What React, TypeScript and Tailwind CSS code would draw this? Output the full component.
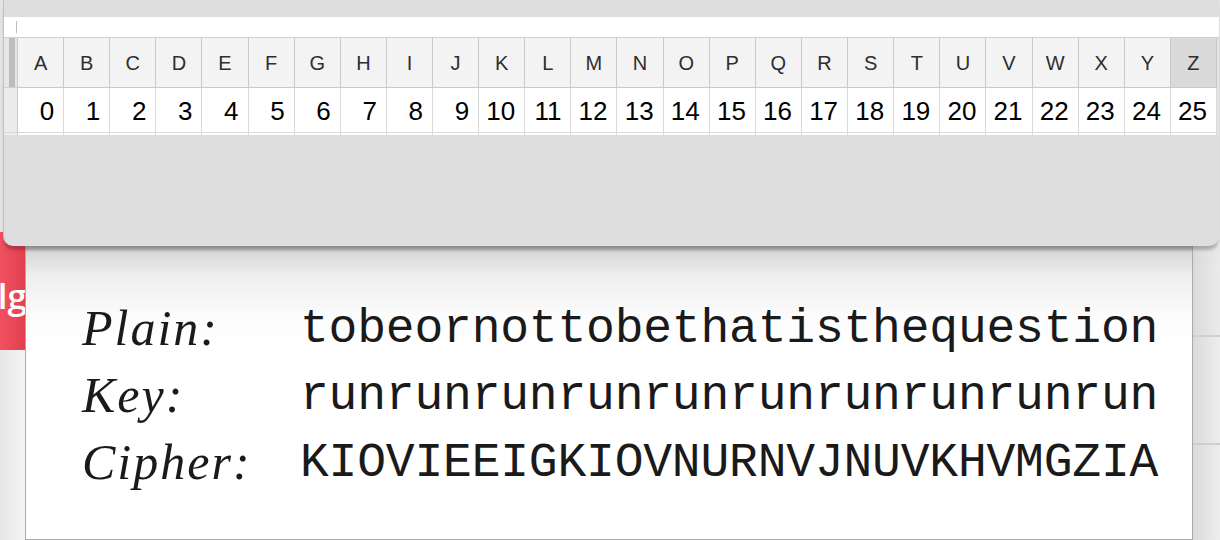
import React from 'react';

const letters = 'ABCDEFGHIJKLMNOPQRSTUVWXYZ'.split('');

const rows = [
  { label: 'Plain:', text: 'tobeornottobethatisthequestion' },
  { label: 'Key:', text: 'runrunrunrunrunrunrunrunrunrun' },
  { label: 'Cipher:', text: 'KIOVIEEIGKIOVNURNVJNUVKHVMGZIA' },
];

const SheetWindow = () => (
  <div className="relative z-10 ml-[3px] w-[1216px] h-[246px] bg-[#dedede] border-l border-[#c2c2c2] rounded-b-[10px] shadow-[0_5px_3px_-1px_rgba(0,0,0,0.22)] overflow-hidden">
    <div className="h-[17px]" />
    <div className="h-[20px] bg-white flex items-center pl-[12px]">
      <div className="w-px h-[12px] bg-[#bcbcbc]" />
    </div>
    <div className="flex border-t border-[#cfcfcf]">
      <div className="w-[13px] flex flex-col">
        <div className="h-[50px] bg-[#e6e6e6] flex border-b border-[#cfcfcf]">
          <div className="w-[5px]" />
          <div className="w-[6px] bg-[#bdbdbd]" />
        </div>
        <div className="h-[45px] bg-[#ececec] border-b border-[#d8d8d8]" />
        <div className="h-[2px] bg-[#ececec]" />
      </div>
      <div className="w-[1200px] grid grid-cols-[repeat(26,1fr)] border-l border-[#c9c9c9]">
        {letters.map((l) => (
          <div
            key={l}
            className={`h-[50px] flex items-center justify-center border-r border-b border-[#c9c9c9] text-[20px] text-[#2e2e2e] font-['Liberation_Sans',Arial,sans-serif] ${
              l === 'Z' ? 'bg-[#dadada]' : 'bg-[#f3f3f3]'
            }`}
          >
            {l}
          </div>
        ))}
        {letters.map((l, i) => (
          <div
            key={'n' + l}
            className="h-[45px] flex items-center justify-end pr-[9px] pt-[2px] bg-white border-r border-b border-[#dadada] text-[26px] text-black font-['Liberation_Sans',Arial,sans-serif]"
          >
            {i}
          </div>
        ))}
        {letters.map((l) => (
          <div key={'e' + l} className="h-[2px] bg-white border-r border-[#dadada]" />
        ))}
      </div>
      <div className="flex-1 bg-[#e4e4e4]" />
    </div>
  </div>
);

export default function App() {
  return (
    <div className="w-[1220px] h-[540px] overflow-hidden bg-[#e3e3e3] flex flex-col">
      <SheetWindow />
      <div className="-mt-[14px] flex flex-1">
        <div className="w-[25px] flex flex-col bg-gradient-to-r from-[#e6e6e6] to-[#f4f4f4]">
          <div className="h-[118px] bg-gradient-to-r from-[#f0505f] to-[#e2404f] overflow-hidden flex justify-end pt-[46px]">
            <span className="text-white text-[35px] leading-none font-semibold font-['Open_Sans',sans-serif] whitespace-nowrap mr-[-2px]">
              lg
            </span>
          </div>
        </div>
        <div className="w-[1168px] border-l border-r border-b border-[#a9a9a9] bg-[linear-gradient(to_bottom,#b3b3b3_14px,#d9d9d9_21px,#efefef_45px,#fcfcfc_85px,#ffffff_110px)] pt-[54px] pl-[56px]">
          <div className="grid grid-cols-[218px_auto]">
            {rows.map((r) => (
              <React.Fragment key={r.label}>
                <div className="h-[67px] flex items-end text-[50px] leading-none italic tracking-[2px] text-[#1a1a1a] font-['Liberation_Serif','Times_New_Roman',serif]">
                  {r.label}
                </div>
                <div className="h-[67px] flex items-end text-[48px] leading-none tracking-[-0.2px] text-[#1a1a1a] font-['Liberation_Mono','Courier_New',monospace]">
                  {r.text}
                </div>
              </React.Fragment>
            ))}
          </div>
        </div>
        <div className="flex-1 flex flex-col bg-[linear-gradient(to_bottom,#b3b3b3_14px,#d6d6d6_21px,transparent_40px)]">
          <div className="h-[105px] bg-gradient-to-r from-[#dadada] to-[#ececec] border-b-2 border-[#cfcfcf] opacity-90" />
          <div className="h-[108px] bg-gradient-to-r from-[#dadada] to-[#eeeeee] border-b-2 border-[#cfcfcf]" />
          <div className="flex-1 bg-gradient-to-r from-[#dadada] to-[#eeeeee]" />
        </div>
      </div>
    </div>
  );
}
